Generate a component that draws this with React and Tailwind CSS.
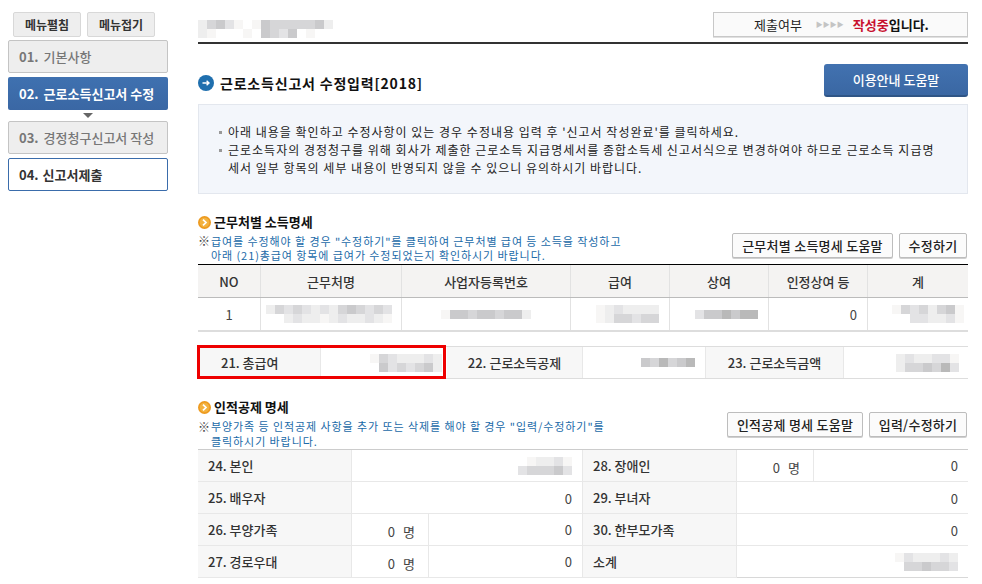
const shades = {
  " ": "bg-transparent",
  a: "bg-[#f7f6f5]",
  b: "bg-[#eeeeee]",
  c: "bg-[#e3e3e5]",
  d: "bg-[#d6d6d8]",
  e: "bg-[#cacacc]",
  f: "bg-[#b9b9b9]",
};

// blurred out values, one string per row of 9px blocks
const Mosaic = ({ rows }) => (
  <div className="flex flex-col">
    {rows.map((row, i) => (
      <div key={i} className="flex">
        {row.split("").map((s, j) => (
          <div key={j} className={`w-[9px] h-[9px] ${shades[s]}`} />
        ))}
      </div>
    ))}
  </div>
);

const SectionTitle = ({ children }) => (
  <div className="flex items-center gap-[3px] h-[16px]">
    <svg width="13" height="13" viewBox="0 0 13 13">
      <circle cx="6.5" cy="6.5" r="6.5" fill="#ed9a1f" />
      <circle cx="6.5" cy="6.5" r="4.8" fill="#f3b23f" />
      <path d="M5 3.6 L8 6.5 L5 9.4" fill="none" stroke="#fff" strokeWidth="1.7" />
    </svg>
    <span className="text-[13px] font-bold text-[#111] mt-[-2px]">{children}</span>
  </div>
);

const GrayBtn = ({ children, className }) => (
  <div className={`h-[25px] flex items-center justify-center bg-[#fbfbfb] border border-[#bdbdbd] rounded-[2px] shadow-[0_1px_0_#cfcfcf] text-[13px] font-medium text-[#222] tracking-[0.25px] ${className}`}>
    {children}
  </div>
);

const Th = ({ children, className }) => (
  <div className={`h-[32px] flex items-center justify-center bg-[#f4f3f2] text-[13px] font-medium text-[#333] border-r border-[#e2e2e2] ${className}`}>
    {children}
  </div>
);

const Td = ({ children, className }) => (
  <div className={`h-[32px] flex items-center justify-end text-[13px] text-[#444] border-r border-[#e2e2e2] ${className}`}>
    {children}
  </div>
);

const RowLabel = ({ children }) => (
  <div className="h-[32px] flex items-center pl-[10px] bg-[#f7f7f7] text-[13px] font-medium text-[#333] border-r border-b border-[#e8e8e8]">
    {children}
  </div>
);

const ValueCell = ({ children, className }) => (
  <div className={`h-[32px] flex items-center justify-end pr-[10px] text-[13px] text-[#444] border-b border-[#e8e8e8] ${className}`}>
    {children}
  </div>
);

const CountCells = () => (
  <div className="grid grid-cols-[77px_1fr] h-[32px] border-b border-[#e8e8e8]">
    <div className="flex items-center justify-end gap-[8px] pr-[13px] pt-[3px] text-[13px] text-[#444] border-r border-[#e8e8e8]">
      <span>0</span>
      <span>명</span>
    </div>
    <div className="flex items-center justify-end pr-[10px] text-[13px] text-[#444]">0</div>
  </div>
);

const Bullet = () => (
  <div className="w-[9px] h-[18px] shrink-0 flex items-center">
    <div className="w-[3px] h-[3px] bg-[#999]" />
  </div>
);

const App = () => {
  return (
    <div className="w-[982px] h-[584px] overflow-hidden bg-white flex font-['Noto_Sans_CJK_KR','Noto_Sans',sans-serif] leading-none">
      {/* Sidebar */}
      <div className="w-[198px] shrink-0 pl-[8px] pt-[12px]">
        <div className="flex gap-[6px] pl-[5px]">
          <div className="w-[68px] h-[25px] flex items-center justify-center bg-[#eeeeee] border border-[#d8d8d8] rounded-[2px] text-[12px] font-bold text-[#333]">메뉴펼침</div>
          <div className="w-[68px] h-[25px] flex items-center justify-center bg-[#eeeeee] border border-[#d8d8d8] rounded-[2px] text-[12px] font-bold text-[#333]">메뉴접기</div>
        </div>
        <div className="w-[160px] mt-[3px] flex flex-col">
          <div className="h-[33px] flex items-center pl-[10px] bg-[#eeeeee] border border-[#c4c4c4] rounded-[2px] text-[13px] font-medium text-[#777]">
            <span className="font-bold mr-[5px]">01.</span>기본사항
          </div>
          <div className="h-[33px] mt-[4px] flex items-center pl-[11px] bg-gradient-to-b from-[#3f71b0] to-[#3a67a4] rounded-[2px] text-[13px] font-bold text-white">
            <span className="mr-[5px]">02.</span>근로소득신고서 수정
          </div>
          <div className="h-[11px] flex items-center justify-center">
            <div className="w-0 h-0 border-x-[5px] border-x-transparent border-t-[5px] border-t-[#666]" />
          </div>
          <div className="h-[33px] flex items-center pl-[10px] bg-[#eeeeee] border border-[#c4c4c4] rounded-[2px] text-[13px] font-medium text-[#777]">
            <span className="font-bold mr-[5px]">03.</span>경정청구신고서 작성
          </div>
          <div className="h-[33px] mt-[4px] flex items-center pl-[10px] bg-white border border-[#3a6cab] rounded-[2px] text-[13px] font-bold text-[#333]">
            <span className="mr-[4px]">04.</span>신고서제출
          </div>
        </div>
      </div>

      {/* Main */}
      <div className="w-[770px] shrink-0 flex flex-col">
        <div className="h-[44px] border-b-2 border-[#333] flex justify-between">
          <div className="pt-[20px]">
            <Mosaic rows={["bdeca aedddddeb", "ba   a edce a"]} />
          </div>
          <div className="w-[255px] h-[25px] mt-[12px] flex items-center bg-[#fafafa] border border-[#c8c8c8] shadow-[0_1px_0_#e0e0e0] text-[13px] text-[#222] pl-[40px]">
            <span>제출여부</span>
            <span className="ml-[14px] mr-[11px] w-[26px] text-[7px] text-[#c4c4c4] whitespace-nowrap">▶▶▶▶</span>
            <span className="font-bold text-[#c8102e]">작성중</span>
            <span className="font-bold text-[#111]">입니다.</span>
          </div>
        </div>

        <div className="h-[53px] mt-[20px] flex items-start justify-between">
          <div className="flex items-center gap-[6px] h-[20px] mt-[9px]">
            <svg width="16" height="16" viewBox="0 0 16 16">
              <circle cx="8" cy="8" r="8" fill="#1f6fae" />
              <path d="M4.5 8 H11 M8.6 5.8 L11 8 L8.6 10.2" fill="none" stroke="#fff" strokeWidth="1.4" />
            </svg>
            <span className="text-[14px] font-bold text-[#111] tracking-[0.8px]">근로소득신고서 수정입력[2018]</span>
          </div>
          <div className="w-[144px] h-[33px] flex items-center justify-center bg-gradient-to-b from-[#4272b0] to-[#3a67a3] border-b-2 border-[#2f5586] rounded-[3px] text-[13px] font-medium text-white">
            이용안내 도움말
          </div>
        </div>

        <div className="h-[90px] mt-[-13px] bg-[#f3f6fb] border border-[#e3e7ee] pl-[20px] pt-[18px] text-[12px] leading-[18px] tracking-[1px] text-[#222]">
          <div className="flex">
            <Bullet />
            <span>아래 내용을 확인하고 수정사항이 있는 경우 수정내용 입력 후 '신고서 작성완료'를 클릭하세요.</span>
          </div>
          <div className="flex">
            <Bullet />
            <span className="whitespace-nowrap">
              근로소득자의 경정청구를 위해 회사가 제출한 근로소득 지급명세서를 종합소득세 신고서식으로 변경하여야 하므로 근로소득 지급명<br />
              세서 일부 항목의 세부 내용이 반영되지 않을 수 있으니 유의하시기 바랍니다.
            </span>
          </div>
        </div>

        {/* 근무처별 소득명세 */}
        <div className="mt-[20px] h-[50px] flex justify-between">
          <div>
            <SectionTitle>근무처별 소득명세</SectionTitle>
            <div className="mt-[4px] flex text-[11px] leading-[14px] tracking-[0.92px] text-[#1a6aa8]">
              <span className="w-[13px] shrink-0 text-[12px] text-[#444] tracking-normal">※</span>
              <span className="whitespace-nowrap">
                급여를 수정해야 할 경우 "수정하기"를 클릭하여 근무처별 급여 등 소득을 작성하고<br />
                아래 (21)총급여 항목에 급여가 수정되었는지 확인하시기 바랍니다.
              </span>
            </div>
          </div>
          <div className="flex gap-[6px] pt-[19px] pr-[1px]">
            <GrayBtn className="w-[161px]">근무처별 소득명세 도움말</GrayBtn>
            <GrayBtn className="w-[68px]">수정하기</GrayBtn>
          </div>
        </div>

        <div className="border-t border-black">
          <div className="grid grid-cols-[63px_141px_169px_99px_99px_99px_1fr] border-b border-[#bbbbbb]">
            <Th>NO</Th>
            <Th>근무처명</Th>
            <Th>사업자등록번호</Th>
            <Th>급여</Th>
            <Th>상여</Th>
            <Th>인정상여 등</Th>
            <Th className="border-r-0">계</Th>
          </div>
          <div className="grid grid-cols-[63px_141px_169px_99px_99px_99px_1fr] border-b-2 border-[#dddddd]">
            <Td className="!justify-center">1</Td>
            <Td className="pr-[9px]"><Mosaic rows={["bdcdcbcbdedcdc", "  bcbbabcbbcba"]} /></Td>
            <Td className="pr-[39px]"><Mosaic rows={["aeedeedeeb"]} /></Td>
            <Td className="pr-[10px]"><Mosaic rows={["abcbbbb", "abddcdd"]} /></Td>
            <Td className="pr-[10px]"><Mosaic rows={["ceefeff"]} /></Td>
            <Td className="pr-[10px]">0</Td>
            <Td className="pr-[4px] border-r-0"><Mosaic rows={["adcdbdea", "  ccbbca"]} /></Td>
          </div>
        </div>

        <div className="relative mt-[14px] grid grid-cols-[123px_126px_136px_123px_138px_1fr] border-y border-[#dddddd] h-[33px]">
          <div className="flex items-center pl-[23px] bg-[#f7f7f7] text-[13px] font-medium text-[#333] border-r border-[#e8e8e8]">21. 총급여</div>
          <div className="flex items-center justify-end pr-[5px]"><Mosaic rows={["adcbbbcb", " ecdcdeb"]} /></div>
          <div className="flex items-center justify-center bg-[#f7f7f7] text-[13px] font-medium text-[#333] border-r border-[#e8e8e8]">22. 근로소득공제</div>
          <div className="flex items-center justify-end pr-[10px] border-r border-[#e8e8e8]"><Mosaic rows={["edfdef"]} /></div>
          <div className="flex items-center justify-center bg-[#f7f7f7] text-[13px] font-medium text-[#333] border-r border-[#e8e8e8]">23. 근로소득금액</div>
          <div className="flex items-center justify-end pr-[9px]"><Mosaic rows={["bcbbcca", "bddedfc"]} /></div>
          {/* highlight over the first two cells */}
          <div className="absolute left-[-1px] top-[-2px] w-[249px] h-[34px] border-[3px] border-[#ee0000]" />
        </div>

        {/* 인적공제 명세 */}
        <div className="mt-[20px] h-[50px] flex justify-between">
          <div>
            <SectionTitle>인적공제 명세</SectionTitle>
            <div className="mt-[4px] flex text-[11px] leading-[15px] tracking-[0.92px] text-[#1a6aa8]">
              <span className="w-[13px] shrink-0 text-[12px] text-[#444] tracking-normal">※</span>
              <span className="whitespace-nowrap">
                부양가족 등 인적공제 사항을 추가 또는 삭제를 해야 할 경우 "입력/수정하기"를<br />
                클릭하시기 바랍니다.
              </span>
            </div>
          </div>
          <div className="flex gap-[6px] pt-[13px] pr-[1px]">
            <GrayBtn className="w-[136px]">인적공제 명세 도움말</GrayBtn>
            <GrayBtn className="w-[98px]">입력/수정하기</GrayBtn>
          </div>
        </div>

        <div className="border-t border-[#cccccc] grid grid-cols-[154px_231px_154px_1fr]">
          <RowLabel>24. 본인</RowLabel>
          <ValueCell className="border-r border-r-[#e8e8e8] pr-[8px]"><Mosaic rows={[" abbca", "cdddec"]} /></ValueCell>
          <RowLabel>28. 장애인</RowLabel>
          <CountCells />

          <RowLabel>25. 배우자</RowLabel>
          <ValueCell className="border-r border-r-[#e8e8e8] pt-[2px]">0</ValueCell>
          <RowLabel>29. 부녀자</RowLabel>
          <ValueCell className="pt-[2px]">0</ValueCell>

          <RowLabel>26. 부양가족</RowLabel>
          <div className="border-r border-[#e8e8e8]"><CountCells /></div>
          <RowLabel>30. 한부모가족</RowLabel>
          <ValueCell className="pt-[2px]">0</ValueCell>

          <RowLabel>27. 경로우대</RowLabel>
          <div className="border-r border-[#e8e8e8]"><CountCells /></div>
          <RowLabel>소계</RowLabel>
          <ValueCell className="pr-[6px] border-b-[#d8d8d8]"><Mosaic rows={["acbbbcb", " ddeddc"]} /></ValueCell>
        </div>
      </div>
    </div>
  );
};

export default App;
